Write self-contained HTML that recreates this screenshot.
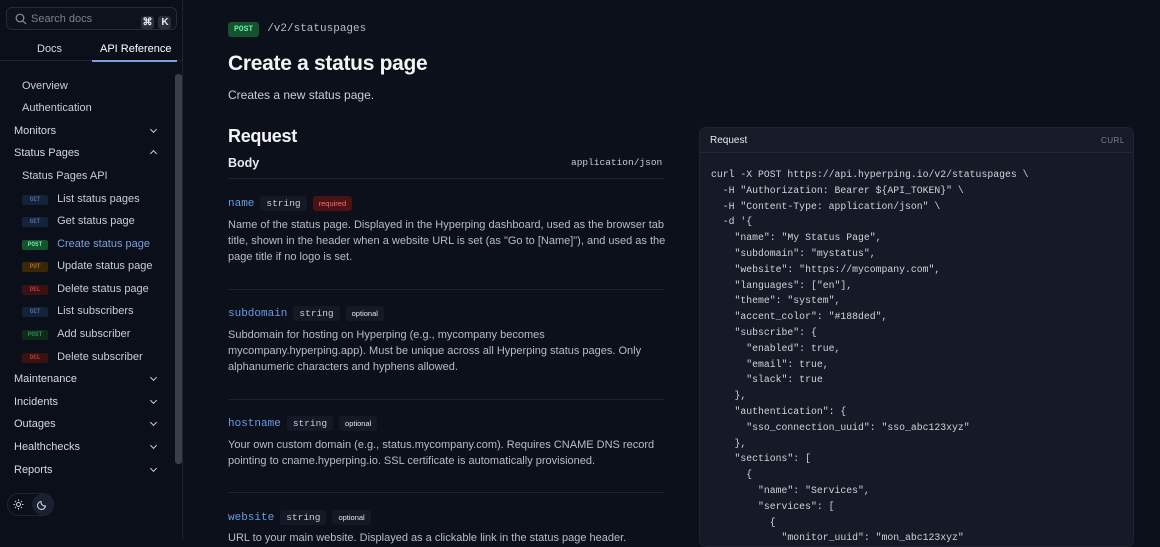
<!DOCTYPE html>
<html><head><meta charset="utf-8"><style>
*{margin:0;padding:0;box-sizing:border-box}
body{width:1160px;height:539px;overflow:hidden;background:#0c101b;font-family:"Liberation Sans",sans-serif;color:#d1d5db;position:relative}
.a{position:absolute;white-space:nowrap}
.side{position:absolute;left:0;top:0;width:183px;height:539px;background:#0b0f19;border-right:1px solid #1f2430}
.search{left:6px;top:7px;width:171px;height:23px;border:1px solid #262b38;border-radius:6px;background:#0e121d}
.kbd{display:inline-block;background:#2a2f3c;color:#e5e7eb;font-size:10px;width:13px;height:13px;text-align:center;line-height:13px;border-radius:3px;font-weight:bold}
.nav{font-size:11px;color:#c9cdd4}
.top{font-size:11px;color:#d6d9df}
.b{display:inline-block;width:26px;height:10px;border-radius:2px;font-size:6px;text-align:center;line-height:10px;font-weight:bold;font-family:"Liberation Mono",monospace;vertical-align:1px}
.get{background:#15233a;color:#4b6a96}.post{background:#14532d;color:#6ee7a0}.put{background:#3a2608;color:#a16d1a}.del{background:#3a1212;color:#b03a3a}.postd{background:#0f2a1a;color:#2f8a52}
.chev{position:absolute;left:151px;width:5px;height:5px;border-right:1.2px solid #c9cdd4;border-bottom:1.2px solid #c9cdd4;transform:rotate(45deg)}
.mono{font-family:"Liberation Mono",monospace}
.p{font-size:11px;color:#b7bcc6;line-height:16px;white-space:normal;width:440px}
.fn{font-family:"Liberation Mono",monospace;color:#6b9be0;font-size:11px}
.ty{font-family:"Liberation Mono",monospace;font-size:9.5px;color:#c9cdd4;background:#141925;padding:2px 6px;border-radius:3px;margin-left:6px}
.opt{font-size:7.5px;color:#e5e7eb;background:#141925;padding:3px 6px;border-radius:3px;margin-left:6px}
.req{font-size:7.5px;color:#f07070;background:#4a1212;padding:3px 6px;border-radius:3px;margin-left:6px}
.hr{position:absolute;left:228px;width:436px;height:1px;background:#1e2330}
.code{position:absolute;left:699px;top:127px;width:435px;height:420px;background:#161a26;border-radius:7px;border:1px solid #1f2430}
pre{position:absolute;left:711px;top:166px;font-family:"Liberation Mono",monospace;font-size:9.8px;line-height:15.8px;color:#cfd3da}
</style></head><body>
<div class="side"></div>
<div class="a search"><svg style="position:absolute;left:8px;top:5px" width="12" height="12" viewBox="0 0 12 12"><circle cx="5" cy="5" r="3.8" stroke="#8b919c" stroke-width="1.2" fill="none"/><path d="M8 8l3 3" stroke="#8b919c" stroke-width="1.2"/></svg><span class="a" style="left:24px;top:5px;font-size:11px;color:#7c818c">Search docs</span><span class="a" style="left:134px;top:4px"><span class="kbd">⌘</span> <span class="kbd">K</span></span></div>
<div class="a" style="left:37px;top:43px;font-size:11px;color:#d6d9df">Docs</div>
<div class="a" style="left:100px;top:43px;font-size:11px;color:#fff">API Reference</div>
<div class="a" style="left:0;top:60px;width:183px;height:1px;background:#1e2330"></div>
<div class="a" style="left:92px;top:60px;width:85px;height:2px;background:#7c9fe0"></div>
<div class="a" style="left:175px;top:74px;width:7px;height:390px;background:#3a3e48;border-radius:3px"></div>
<div class="a nav" style="left:22px;top:80px">Overview</div>
<div class="a nav" style="left:22px;top:102px">Authentication</div>
<div class="a top" style="left:14px;top:125px">Monitors</div><div class="chev" style="top:127px"></div>
<div class="a top" style="left:14px;top:147px">Status Pages</div><div class="chev" style="top:151px;transform:rotate(225deg)"></div>
<div class="a nav" style="left:22px;top:170px">Status Pages API</div>
<div class="a nav" style="left:22px;top:193px"><span class="b get">GET</span> <span style="margin-left:6px">List status pages</span></div>
<div class="a nav" style="left:22px;top:215px"><span class="b get">GET</span> <span style="margin-left:6px">Get status page</span></div>
<div class="a nav" style="left:22px;top:238px"><span class="b post">POST</span> <span style="margin-left:6px;color:#7c9fe0">Create status page</span></div>
<div class="a nav" style="left:22px;top:260px"><span class="b put">PUT</span> <span style="margin-left:6px">Update status page</span></div>
<div class="a nav" style="left:22px;top:283px"><span class="b del">DEL</span> <span style="margin-left:6px">Delete status page</span></div>
<div class="a nav" style="left:22px;top:305px"><span class="b get">GET</span> <span style="margin-left:6px">List subscribers</span></div>
<div class="a nav" style="left:22px;top:328px"><span class="b postd">POST</span> <span style="margin-left:6px">Add subscriber</span></div>
<div class="a nav" style="left:22px;top:351px"><span class="b del">DEL</span> <span style="margin-left:6px">Delete subscriber</span></div>
<div class="a top" style="left:14px;top:373px">Maintenance</div><div class="chev" style="top:375px"></div>
<div class="a top" style="left:14px;top:396px">Incidents</div><div class="chev" style="top:398px"></div>
<div class="a top" style="left:14px;top:418px">Outages</div><div class="chev" style="top:420px"></div>
<div class="a top" style="left:14px;top:441px">Healthchecks</div><div class="chev" style="top:443px"></div>
<div class="a top" style="left:14px;top:464px">Reports</div><div class="chev" style="top:466px"></div>
<div class="a" style="left:7px;top:493px;width:47px;height:23px;border:1px solid #1f2430;border-radius:12px"></div>
<div class="a" style="left:32px;top:494px;width:21px;height:21px;border-radius:50%;background:#1a2030"></div>
<svg class="a" style="left:13px;top:499px" width="11" height="11" viewBox="0 0 11 11"><circle cx="5.5" cy="5.5" r="2" fill="none" stroke="#cfd3da"/><path d="M5.5 0.5v1.5M5.5 9v1.5M0.5 5.5h1.5M9 5.5h1.5M2 2l1 1M8 8l1 1M2 9l1-1M8 3l1-1" stroke="#cfd3da"/></svg>
<svg class="a" style="left:37px;top:499px" width="11" height="11" viewBox="0 0 11 11"><path d="M8.5 7A4 4 0 0 1 4 2.5 4 4 0 1 0 8.5 7z" fill="none" stroke="#cfd3da" stroke-width="1.1"/></svg>

<div class="a" style="left:228px;top:18px"><span class="mono" style="display:inline-block;background:#14532d;color:#6ee7a0;font-size:8px;font-weight:bold;padding:3px 6px;border-radius:3px">POST</span><span class="mono" style="font-size:11px;color:#b7bcc6;margin-left:8px">/v2/statuspages</span></div>
<div class="a" style="left:228px;top:52px;font-size:21px;font-weight:bold;color:#f3f4f6;letter-spacing:-0.3px">Create a status page</div>
<div class="a" style="left:228px;top:88px;font-size:12px;color:#c9cdd4">Creates a new status page.</div>
<div class="a" style="left:228px;top:126px;font-size:18px;font-weight:bold;color:#f3f4f6;letter-spacing:-0.3px">Request</div>
<div class="a" style="left:228px;top:156px;font-size:12.5px;font-weight:bold;color:#e5e7eb">Body</div>
<div class="a mono" style="left:571px;top:157px;font-size:9.5px;color:#c9cdd4">application/json</div>
<div class="hr" style="top:178px"></div>
<div class="a" style="left:228px;top:193px"><span class="fn">name</span><span class="ty">string</span><span class="req">required</span></div>
<div class="a p" style="left:228px;top:217px">Name of the status page. Displayed in the Hyperping dashboard, used as the browser tab title, shown in the header when a website URL is set (as "Go to [Name]"), and used as the page title if no logo is set.</div>
<div class="hr" style="top:289px"></div>
<div class="a" style="left:228px;top:303px"><span class="fn">subdomain</span><span class="ty">string</span><span class="opt">optional</span></div>
<div class="a p" style="left:228px;top:327px">Subdomain for hosting on Hyperping (e.g., mycompany becomes mycompany.hyperping.app). Must be unique across all Hyperping status pages. Only alphanumeric characters and hyphens allowed.</div>
<div class="hr" style="top:399px"></div>
<div class="a" style="left:228px;top:413px"><span class="fn">hostname</span><span class="ty">string</span><span class="opt">optional</span></div>
<div class="a p" style="left:228px;top:437px">Your own custom domain (e.g., status.mycompany.com). Requires CNAME DNS record pointing to cname.hyperping.io. SSL certificate is automatically provisioned.</div>
<div class="hr" style="top:492px"></div>
<div class="a" style="left:228px;top:507px"><span class="fn">website</span><span class="ty">string</span><span class="opt">optional</span></div>
<div class="a p" style="left:228px;top:530px">URL to your main website. Displayed as a clickable link in the status page header.</div>

<div class="code"><div style="height:25px;border-bottom:1px solid #222736;background:#171b27;border-radius:7px 7px 0 0"></div></div>
<div class="a" style="left:710px;top:135px;font-size:10px;color:#e5e7eb">Request</div>
<div class="a" style="left:1101px;top:136px;font-size:8px;color:#7c818c;letter-spacing:0.5px">CURL</div>
<pre style="top:167px">curl -X POST https://api.hyperping.io/v2/statuspages \
  -H "Authorization: Bearer ${API_TOKEN}" \
  -H "Content-Type: application/json" \
  -d '{
    "name": "My Status Page",
    "subdomain": "mystatus",
    "website": "https://mycompany.com",
    "languages": ["en"],
    "theme": "system",
    "accent_color": "#188ded",
    "subscribe": {
      "enabled": true,
      "email": true,
      "slack": true
    },
    "authentication": {
      "sso_connection_uuid": "sso_abc123xyz"
    },
    "sections": [
      {
        "name": "Services",
        "services": [
          {
            "monitor_uuid": "mon_abc123xyz"</pre>
</body></html>
